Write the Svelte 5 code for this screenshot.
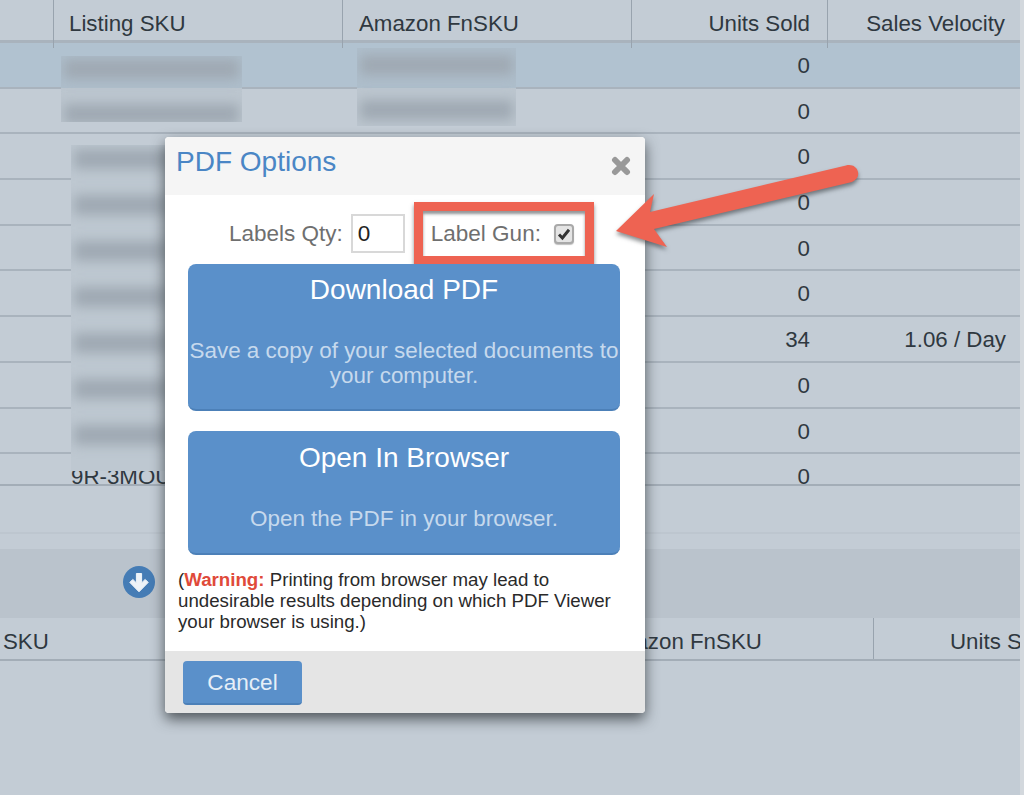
<script>
  const rows = [
    { units: '0', velocity: '', active: true },
    { units: '0', velocity: '' },
    { units: '0', velocity: '' },
    { units: '0', velocity: '' },
    { units: '0', velocity: '' },
    { units: '0', velocity: '' },
    { units: '34', velocity: '1.06 / Day' },
    { units: '0', velocity: '' },
    { units: '0', velocity: '' },
    { units: '0', velocity: '', sku: '9R-3MOU', last: true }
  ];
  const bars = [0, 1, 2, 3, 4, 5, 6];
</script>

<div class="page">
  <div class="main">
    <div class="table">
      <div class="row head">
        <div class="cell"></div>
        <div class="cell">Listing SKU</div>
        <div class="cell">Amazon FnSKU</div>
        <div class="cell num">Units Sold</div>
        <div class="cell num last-col">Sales Velocity</div>
      </div>
      {#each rows as r}
        <div class="row body" class:active={r.active} class:last={r.last}>
          <div class="cell"></div>
          <div class="cell sku">{r.sku ?? ''}</div>
          <div class="cell"></div>
          <div class="cell num">{r.units}</div>
          <div class="cell num last-col">{r.velocity}</div>
        </div>
      {/each}
    </div>

    <div class="spacer"></div>
    <div class="band">
      <svg class="down" viewBox="0 0 32 32" width="32" height="32" aria-hidden="true">
        <circle cx="16" cy="16" r="16" fill="#457cb5" />
        <path d="M13.4 7.5h5.2v9.4l3.6-3.5 3 3L16 25.8 6.800 16.400l3-3 3.600 3.500z" fill="#eef3f8" stroke="#eef3f8" stroke-width="1" stroke-linejoin="round" />
      </svg>
    </div>
    <div class="foot-head">
      <div class="fh-sku">SKU</div>
      <div class="fh-fn">Amazon FnSKU</div>
      <div class="fh-units">Units Sold</div>
    </div>
  </div>

  <div class="smudge s1"><i></i><i></i></div>
  <div class="smudge s2"><i></i><i></i></div>
  <div class="smudge s3">
    {#each bars as b}<i></i>{/each}
  </div>

  <div class="modal">
    <header>
      <h2>PDF Options</h2>
      <svg class="close" viewBox="0 0 20 20" width="20" height="20" aria-hidden="true">
        <path d="M4 4 16 16M16 4 4 16" stroke="#999" stroke-width="6" stroke-linecap="round" />
      </svg>
    </header>
    <div class="content">
      <div class="opts">
        <label for="qty">Labels Qty:</label>
        <input id="qty" value="0" />
        <div class="gun">
          <span>Label Gun:</span>
          <span class="check">
            <svg viewBox="0 0 14 14" width="14" height="14" aria-hidden="true">
              <path d="M2 7.500 5.400 11 12 2.800" fill="none" stroke="#333" stroke-width="3" />
            </svg>
          </span>
        </div>
      </div>
      <div class="action dl">
        <div class="big">Download PDF</div>
        <div class="small">Save a copy of your selected documents to your computer.</div>
      </div>
      <div class="action open">
        <div class="big">Open In Browser</div>
        <div class="small">Open the PDF in your browser.</div>
      </div>
      <p class="warn">(<b>Warning:</b> Printing from browser may lead to undesirable results depending on which PDF Viewer your browser is using.)</p>
    </div>
    <footer>
      <button>Cancel</button>
    </footer>
  </div>

  <svg class="arrow" viewBox="0 0 260 110" width="260" height="110" aria-hidden="true">
    <path d="M4 67 42 30 38 48 234 1.500C240 0 245 3 246 8 247 13 244 16 240 18L42 65 55 83z" fill="#ee6352" />
  </svg>
</div>

<style>
  :global(body) {
    margin: 0;
    background: #d3d8dd;
  }
  .page {
    position: relative;
    width: 1024px;
    height: 795px;
    overflow: hidden;
    background: #d3d8dd;
    font-family: "Liberation Sans", Arial, sans-serif;
    color: #2f3840;
    font-size: 22.3px;
  }
  .main {
    width: 1020px;
    height: 795px;
    overflow: hidden;
    background: #c3ccd5;
  }
  .row {
    display: grid;
    grid-template-columns: 54px 289px 289px 196px 192px;
    box-sizing: border-box;
    border-bottom: 2px solid #a9b3bd;
  }
  .head {
    height: 43px;
    border-bottom-width: 3px;
  }
  .head .cell {
    border-right: 1px solid #98a3ae;
    padding: 0 17px 0 16px;
    line-height: 48px;
    white-space: nowrap;
  }
  .head .cell:first-child {
    padding: 0;
  }
  .head .cell:nth-child(2) {
    padding-left: 15px;
  }
  .head .cell.last-col {
    border-right: none;
    padding-right: 15px;
  }
  .body {
    height: 45.7px;
    line-height: 46px;
  }
  .body .cell {
    padding: 0 18px 0 17px;
    white-space: nowrap;
  }
  .body .cell.last-col {
    padding-right: 14px;
  }
  .active {
    background: #b1c2d0;
  }
  .last {
    height: 32px;
    overflow: hidden;
    border-bottom: 2px solid #a3adb7;
  }
  .num {
    text-align: right;
  }
  .spacer {
    height: 48px;
    margin-bottom: 15px;
    border-bottom: 2px solid #bdc6cf;
    box-sizing: border-box;
  }
  .band {
    height: 69px;
    background: #bac3cc;
    box-sizing: border-box;
    padding: 17px 0 0 123px;
  }
  .down {
    display: block;
  }
  .foot-head {
    height: 43px;
    box-sizing: border-box;
    border-bottom: 2px solid #a3adb7;
    display: grid;
    grid-template-columns: 602px 272px 146px;
    line-height: 47px;
    white-space: nowrap;
    overflow: hidden;
  }
  .fh-sku {
    padding-left: 3px;
  }
  .fh-fn {
    border-right: 1px solid #98a3ae;
  }
  .fh-units {
    padding-left: 76px;
    overflow: hidden;
  }
  .smudge {
    position: absolute;
    overflow: hidden;
    display: flex;
    flex-direction: column;
  }
  .smudge i {
    display: block;
    flex: none;
    height: 20px;
    margin: 0 3px;
    background: #9fa9b3;
    filter: blur(6px);
  }
  .s1 {
    left: 61px;
    top: 56px;
    width: 181px;
    height: 66px;
    background: linear-gradient(#aebecb 0 32px, #bcc6cf 32px);
    padding-top: 3px;
    box-sizing: border-box;
    gap: 25px;
  }
  .s2 {
    left: 357px;
    top: 48px;
    width: 159px;
    height: 78px;
    background: linear-gradient(#aebecb 0 40px, #bcc6cf 40px);
    padding-top: 7px;
    box-sizing: border-box;
    gap: 25px;
  }
  .s3 {
    left: 71px;
    top: 145px;
    width: 100px;
    height: 326px;
    background: #bec8d1;
    padding-top: 4px;
    box-sizing: border-box;
    gap: 26px;
  }
  .modal {
    position: absolute;
    left: 165px;
    top: 137px;
    width: 480px;
    height: 576px;
    border-radius: 4px;
    overflow: hidden;
    background: #fff;
    box-shadow: 0 6px 14px rgba(40, 45, 50, 0.75);
    display: flex;
    flex-direction: column;
  }
  header {
    height: 58px;
    flex: none;
    background: #f5f5f5;
    display: flex;
    justify-content: space-between;
    padding: 8px 14px 0 11px;
    box-sizing: border-box;
  }
  h2 {
    margin: 0;
    font-size: 28px;
    font-weight: 400;
    line-height: 34px;
    color: #4a86c5;
  }
  .close {
    display: block;
    margin-top: 11px;
  }
  .content {
    flex: 1;
    padding: 7px 25px 0 13px;
    display: flex;
    flex-direction: column;
  }
  .opts {
    display: flex;
    align-items: center;
    height: 63px;
    padding-left: 51px;
    color: #6f6f6f;
    flex: none;
    font-size: 22.5px;
  }
  label {
    white-space: nowrap;
  }
  input {
    width: 54px;
    height: 39px;
    box-sizing: border-box;
    border: 2px solid #d8d8d8;
    margin: 0 9px 0 8px;
    padding: 0 5px;
    font: inherit;
    color: #222;
    outline: none;
    flex: none;
  }
  .gun {
    box-sizing: border-box;
    width: 180px;
    height: 63px;
    flex: none;
    border: 9px solid #ee6352;
    box-shadow: 0 3px 4px rgba(40, 45, 50, 0.55), inset 0 3px 3px rgba(40, 45, 50, 0.5);
    display: flex;
    align-items: center;
    padding-left: 8px;
    gap: 13px;
    white-space: nowrap;
  }
  .check {
    width: 20px;
    height: 20px;
    box-sizing: border-box;
    border: 2px solid #a9a9a9;
    border-radius: 4px;
    background: #e4e4e4;
    display: flex;
    align-items: center;
    justify-content: center;
    box-shadow: 0 1px 1px rgba(0, 0, 0, 0.25);
  }
  .action {
    margin-left: 10px;
    width: 432px;
    box-sizing: border-box;
    background: #5a90ca;
    border-radius: 8px;
    border-bottom: 2px solid #4c80b8;
    text-align: center;
    color: #fff;
    flex: none;
  }
  .dl {
    height: 147px;
    margin-top: -1px;
  }
  .open {
    height: 124px;
    margin-top: 20px;
  }
  .big {
    font-size: 28px;
    line-height: 34px;
    padding-top: 9px;
  }
  .open .big {
    padding-top: 10px;
  }
  .small {
    font-size: 22.45px;
    line-height: 25px;
    color: #c6d9ed;
    margin-top: 31px;
  }
  .warn {
    margin: 14px 0 0;
    font-size: 18.7px;
    line-height: 21px;
    color: #2a2a2a;
  }
  .warn b {
    color: #e04a3a;
  }
  footer {
    height: 62px;
    flex: none;
    background: #e5e5e5;
    padding: 10px 0 0 18px;
    box-sizing: border-box;
  }
  button {
    display: block;
    width: 119px;
    height: 44px;
    background: #5a90ca;
    border: none;
    border-bottom: 2px solid #4c80b8;
    border-radius: 4px;
    color: #e6eff8;
    font: inherit;
    font-size: 22.6px;
    padding: 2px 0 0;
  }
  .arrow {
    position: absolute;
    left: 612px;
    top: 164px;
    filter: drop-shadow(0 3px 2px rgba(40, 45, 50, 0.55));
  }
</style>
